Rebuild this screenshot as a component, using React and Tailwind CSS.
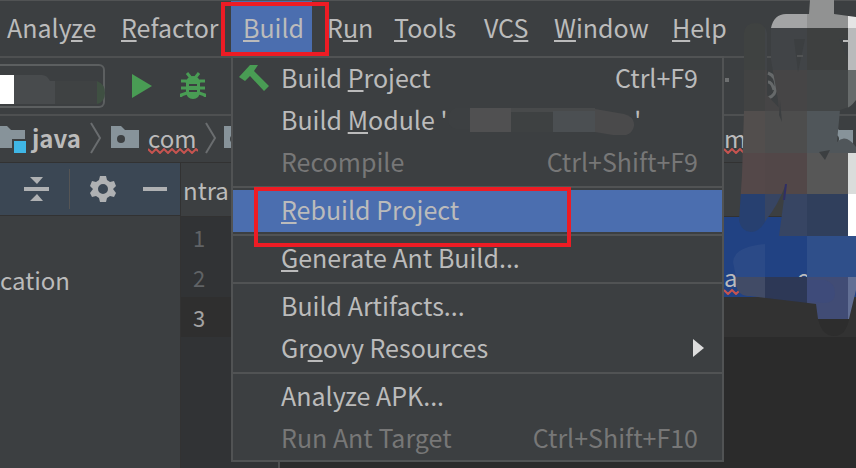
import React from 'react';
import clsx from 'clsx';

const MENUS = [
  { before: 'Analy', key: 'z', after: 'e', width: 'w-[114px]' },
  { before: '', key: 'R', after: 'efactor', width: 'w-[122px]' },
  { before: '', key: 'B', after: 'uild', width: 'w-[84px]', open: true },
  { before: 'R', key: 'u', after: 'n', width: 'w-[67px]' },
  { before: '', key: 'T', after: 'ools', width: 'w-[90px]' },
  { before: 'VC', key: 'S', after: '', width: 'w-[70px]' },
  { before: '', key: 'W', after: 'indow', width: 'w-[118px]' },
  { before: '', key: 'H', after: 'elp', width: 'w-[80px]' },
];

const GROUPS = [
  [
    { before: 'Build ', key: 'P', after: 'roject', shortcut: 'Ctrl+F9', icon: true },
    { before: 'Build ', key: 'M', after: "odule '", masked: true },
    { before: 'Recompile', shortcut: 'Ctrl+Shift+F9', disabled: true },
  ],
  [{ before: '', key: 'R', after: 'ebuild Project', selected: true }],
  [{ before: '', key: 'G', after: 'enerate Ant Build...' }],
  [
    { before: 'Build Artifacts...' },
    { before: 'Gr', key: 'o', after: 'ovy Resources', submenu: true },
  ],
  [
    { before: 'Analyze APK...' },
    { before: 'Run Ant Target', shortcut: 'Ctrl+Shift+F10', disabled: true },
  ],
];

function Label({ before, k, after }) {
  return (
    <span className="whitespace-pre">
      {before}
      {k && <span className="underline decoration-2 underline-offset-2">{k}</span>}
      {after}
    </span>
  );
}

function Hammer() {
  return (
    <svg viewBox="0 0 32 30" className="h-[30px] w-8" fill="#499c54">
      <path d="M0 14 11 2l8 0-4 6 15 15-5 5L11 13l-5 5z" />
    </svg>
  );
}

function Bug() {
  return (
    <svg viewBox="0 0 26 30" className="h-[30px] w-[26px]" stroke="#499c54" strokeWidth="3" fill="none">
      <path d="M7 2l4 5M19 2l-4 5M1 10h5l2 2M25 10h-5l-2 2M1 17h24M1 26v-2l6-2M25 26v-2l-6-2" />
      <path d="M13 5c4 0 7 3 7 7v8c0 5-3 8-7 8s-7-3-7-8v-8c0-4 3-7 7-7z" fill="#499c54" stroke="none" />
      <path d="M9 14h8M9 20h8" stroke="#3c3f41" strokeWidth="2" />
    </svg>
  );
}

function Folder({ source }) {
  return (
    <svg viewBox="0 0 30 30" className="h-[30px] w-[30px] shrink-0">
      <path d="M1 3h10l4 4h14v18H1z" fill="#87939a" />
      {source ? (
        <path d="M17 17h14v14H17z" fill="#3fb6e5" stroke="#3c3f41" strokeWidth="2" />
      ) : (
        <circle cx="11" cy="16" r="4" fill="#3c3f41" />
      )}
    </svg>
  );
}

function Chevron() {
  return (
    <svg viewBox="0 0 12 32" className="h-8 w-3 shrink-0" fill="none" stroke="#6a6d6f" strokeWidth="2">
      <path d="M1 1l9 15-9 15" />
    </svg>
  );
}

function Wave({ className }) {
  return (
    <svg viewBox="0 0 50 6" className={className} fill="none" stroke="#c75450" strokeWidth="2">
      <path d="M0 1l4 4 4-4 4 4 4-4 4 4 4-4 4 4 4-4 4 4 4-4 4 4 4-4 2 2" />
    </svg>
  );
}

function MenuBar() {
  return (
    <nav className="flex h-14 border-t border-[#515354] pl-[7px] text-[25px]">
      {MENUS.map(m => (
        <button key={m.before + m.key} className={clsx('relative flex shrink-0 items-center pb-0.5 text-left', m.width)}>
          {m.open && <span className="absolute inset-y-0 right-[15px] -left-3 bg-[#4b6eaf]" />}
          <span className="relative">
            <Label before={m.before} k={m.key} after={m.after} />
          </span>
        </button>
      ))}
    </nav>
  );
}

function Toolbar() {
  return (
    <div className="flex h-[58px] items-center border-t-2 border-[#4e5051]">
      <button aria-label="Run configuration" className="h-11 w-[105px] shrink-0 rounded-r-md border-2 border-l-0 border-[#5c5f60]">
        <svg viewBox="0 0 106 40" className="h-10 w-[106px]">
          <path d="M0 9h14v29H0z" fill="#fff" />
          <path d="M14 9h28q5 0 8 6h5v23H14z" fill="#484b4d" />
          <path d="M55 15h42v23H55z" fill="#3f4243" />
          <path d="M97 15q8 3 8 12t-8 11z" fill="#3f5042" />
        </svg>
      </button>
      <button aria-label="Run" className="ml-[27px]">
        <svg viewBox="0 0 20 26" className="h-[26px] w-5" fill="#499c54">
          <path d="M0 1l20 12L0 25z" />
        </svg>
      </button>
      <button aria-label="Debug" className="ml-7">
        <Bug />
      </button>
      <span className="mt-5 mr-[127px] ml-auto h-1 w-1 self-start bg-[#6e7071]" />
    </div>
  );
}

function Breadcrumbs() {
  return (
    <div className="flex h-12 items-center border-t-2 border-[#4e5051] pb-0.5">
      <div className="-ml-1 flex items-center">
        <Folder source />
      </div>
      <span className="ml-1.5 w-[58px] font-bold">java</span>
      <Chevron />
      <div className="ml-2 flex">
        <Folder />
      </div>
      <span className="relative ml-2 w-[57px]">
        com
        <Wave className="absolute bottom-0 left-0 h-1.5 w-[50px]" />
      </span>
      <Chevron />
      <div className="ml-1.5 flex">
        <Folder />
      </div>
      <span className="relative ml-auto w-5">
        m
        <Wave className="absolute bottom-0 left-0 h-1.5 w-[50px]" />
      </span>
      <div className="mr-0.5 ml-20 flex">
        <Folder />
      </div>
    </div>
  );
}

function ProjectPanel() {
  return (
    <aside className="w-[181px] shrink-0 border-r border-[#323232]">
      <div className="flex h-[53px] items-center border-b border-[#323232] bg-[#3b4754] pl-6">
        <button aria-label="Collapse all">
          <svg viewBox="0 0 26 26" className="h-[26px] w-[26px]" fill="#afb1b3">
            <path d="M6 1h13l-6 7zM0 11h25v4H0zM6 25h13l-6-7z" />
          </svg>
        </button>
        <span className="ml-[19px] h-10 w-px bg-[#555555]" />
        <button aria-label="Settings" className="ml-5">
          <svg viewBox="0 0 26 26" className="h-[26px] w-[26px]" fill="#afb1b3" fillRule="evenodd">
            <path d="M10 0h6l1 4 3 2 4-1 2 5-3 3 3 4-2 4-4-1-3 2-1 4h-6l-1-4-3-2-4 1-2-4 3-4-3-3 2-5 4 1 3-2zM13 8a5 5 0 1 0 0 10 5 5 0 0 0 0-10z" />
          </svg>
        </button>
        <button aria-label="Hide" className="ml-[27px] h-1 w-6 bg-[#afb1b3]" />
      </div>
      <p className="mt-12">cation</p>
    </aside>
  );
}

function Editor() {
  return (
    <main className="flex min-w-0 grow flex-col bg-[#2b2b2b]">
      <div className="flex h-[54px] items-center border-b border-[#323232] bg-[#3c3f41] pl-0.5">ntra</div>
      <div className="flex grow">
        <div className="w-[99px] shrink-0 border-r-2 border-[#4e5051] bg-[#313335] pl-3 text-[22px] leading-10 text-[#606366]">
          <div>1</div>
          <div>2</div>
          <div className="-ml-3 bg-[#2f2f2f] pl-3 text-[#a4a3a3]">3</div>
        </div>
        <div className="grow leading-10">
          <div className="h-20 bg-[#214283] pt-10 text-right">
            <span className="relative mr-[46px] inline-flex w-[86px] justify-between">
              <span>a</span>
              <span>e</span>
              <Wave className="absolute bottom-0.5 left-0 h-1.5 w-[50px]" />
            </span>
          </div>
          <div className="h-10 bg-[#323232]" />
        </div>
      </div>
    </main>
  );
}

function MenuItem({ item }) {
  return (
    <button
      role="menuitem"
      disabled={item.disabled}
      className={clsx(
        'flex h-[42px] w-full items-center pr-6 pb-0.5 text-left',
        item.selected && 'bg-[#4b6eaf]',
        item.disabled && 'text-[#777777]',
      )}
    >
      <span className="w-12 shrink-0 pl-1.5">{item.icon && <Hammer />}</span>
      <Label before={item.before} k={item.key} after={item.after} />
      {item.masked && (
        <>
          <svg viewBox="0 0 187 30" className="h-[30px] w-[187px]">
            <path d="M8 3q-8 4-7 12t8 9h14V3z" fill="#3d4042" />
            <path d="M23 3h41v24H23z" fill="#505051" />
            <path d="M64 3h42v24H64z" fill="#3e4142" />
            <path d="M64 3h84v4H64z" fill="#484a4b" />
            <path d="M106 6h42v21h-42z" fill="#4b4f52" />
            <path d="M148 4l29 5q11 3 10 12-2 10-15 10l-24-4z" fill="#4a4a4b" />
          </svg>
          <span>'</span>
        </>
      )}
      {item.shortcut && <span className="ml-auto">{item.shortcut}</span>}
      {item.submenu && (
        <svg viewBox="0 0 18 18" className="ml-auto h-[18px] w-[18px] overflow-visible" fill="#dddddd">
          <path d="M13 0l11 9-11 9z" />
        </svg>
      )}
    </button>
  );
}

function BuildMenu() {
  return (
    <div role="menu" className="absolute top-14 left-[231px] w-[493px] border-2 border-[#515354] bg-[#3c3f41] text-[25px]">
      {GROUPS.map((group, i) => (
        <React.Fragment key={i}>
          {i > 0 && (
            <div className="flex h-1.5 items-center">
              <div className="h-0.5 w-full bg-[#515354]" />
            </div>
          )}
          {group.map(item => (
            <MenuItem key={item.before + item.after} item={item} />
          ))}
        </React.Fragment>
      ))}
    </div>
  );
}

// Mosaic smear over the private project names: [x, y, width, height, colour]
const TILES = [
  [65, 0, 42, 28, '#a3a4a5'], [107, 0, 41, 28, '#919292'], [148, 0, 8, 28, '#e5e5e5'],
  [35, 0, 30, 70, '#3f4241'], [65, 28, 42, 42, '#414447'], [107, 28, 41, 42, '#3e4040'], [148, 28, 8, 42, '#b9babb'],
  [35, 70, 30, 41, '#424343'], [65, 70, 42, 41, '#464546'], [107, 70, 41, 41, '#434647'], [148, 70, 8, 41, '#676b6b'],
  [35, 111, 30, 42, '#524e4d'], [65, 111, 42, 42, '#4d4d4d'], [107, 111, 49, 42, '#50565a'],
  [35, 153, 30, 41, '#544849'], [65, 153, 42, 41, '#524748'], [107, 153, 41, 41, '#575757'], [148, 153, 8, 41, '#dadcdb'],
  [35, 194, 30, 42, '#274070'], [65, 194, 42, 42, '#374563'], [107, 194, 41, 42, '#303f5c'], [148, 194, 8, 42, '#ffffff'],
  [33, 236, 32, 41, '#2b4a87'], [107, 236, 49, 41, '#2f4f8a'],
  [33, 277, 32, 42, '#414b66'], [65, 277, 42, 42, '#2d3856'], [107, 277, 41, 42, '#414c75'], [148, 277, 8, 42, '#626f94'],
  [107, 319, 49, 20, '#2d2d2d'],
];

function Smear() {
  return (
    <svg viewBox="0 0 156 340" className="pointer-events-none absolute top-0 right-0 h-[340px] w-[156px]">
      <defs>
        <clipPath id="smear">
          <path d="M44 33Q45 23 55 23T67 33V95L82 111 100 150 86 184Q78 205 66 220 60 232 51 232T39 221L42 175 44 111z" />
          <path d="M79 236L86 184 80 120 78 100 71 60 71 28Q74 14 86 14L109 14 110 0H134V14L156 17V100Q150 108 146 108L140 110 137 142Q146 133 156 147V236z" />
          <path d="M65 244Q34 247 33 262L36 277Q34 296 50 296L100 302 116 304 118 319Q122 336 134 336T149 319L156 290V236H107V277H65z" />
        </clipPath>
      </defs>
      <path d="M68 73q8 3 8 13t-8 12M68 82q4 0 6 8" fill="none" stroke="#66696a" strokeWidth="3" />
      <g clipPath="url(#smear)">
        {TILES.map(([x, y, w, h, fill]) => (
          <rect key={`${x}-${y}`} x={x} y={y} width={w} height={h} fill={fill} shapeRendering="crispEdges" />
        ))}
      </g>
      <path d="M94 39h11l-7 33z" fill="#3c3f41" />
      <path d="M97 56h6" stroke="#515354" strokeWidth="2" />
      <path d="M139 39h9v20z" fill="#3c3f41" />
      <path d="M143 41h6" stroke="#bbbbbb" strokeWidth="2" />
      <path d="M119 152l11-2-5 10z" fill="#3c3f41" />
      <path d="M80 100l2 22-3-7z" fill="#3c3f41" />
      <path d="M86 184l-2 16" stroke="#2f2f66" strokeWidth="2" />
      <path d="M107 280h18q10 3 10 13t-12 10l-16-2z" fill="#3e4b7a" />
    </svg>
  );
}

export default function App() {
  return (
    <div className="relative flex min-h-screen flex-col overflow-hidden bg-[#3c3f41] font-['Noto_Sans_CJK_SC','Open_Sans',sans-serif] text-2xl text-[#bbbbbb]">
      <MenuBar />
      <Toolbar />
      <Breadcrumbs />
      <div className="flex grow border-t border-[#323232]">
        <ProjectPanel />
        <Editor />
      </div>
      <BuildMenu />
      <Smear />
      {/* Red callouts around the menu path */}
      <div className="pointer-events-none absolute top-0.5 left-[221px] h-[54px] w-[108px] border-4 border-[#ed1c24]" />
      <div className="pointer-events-none absolute top-[187px] left-[254px] h-[60px] w-[317px] border-4 border-[#ed1c24]" />
    </div>
  );
}
